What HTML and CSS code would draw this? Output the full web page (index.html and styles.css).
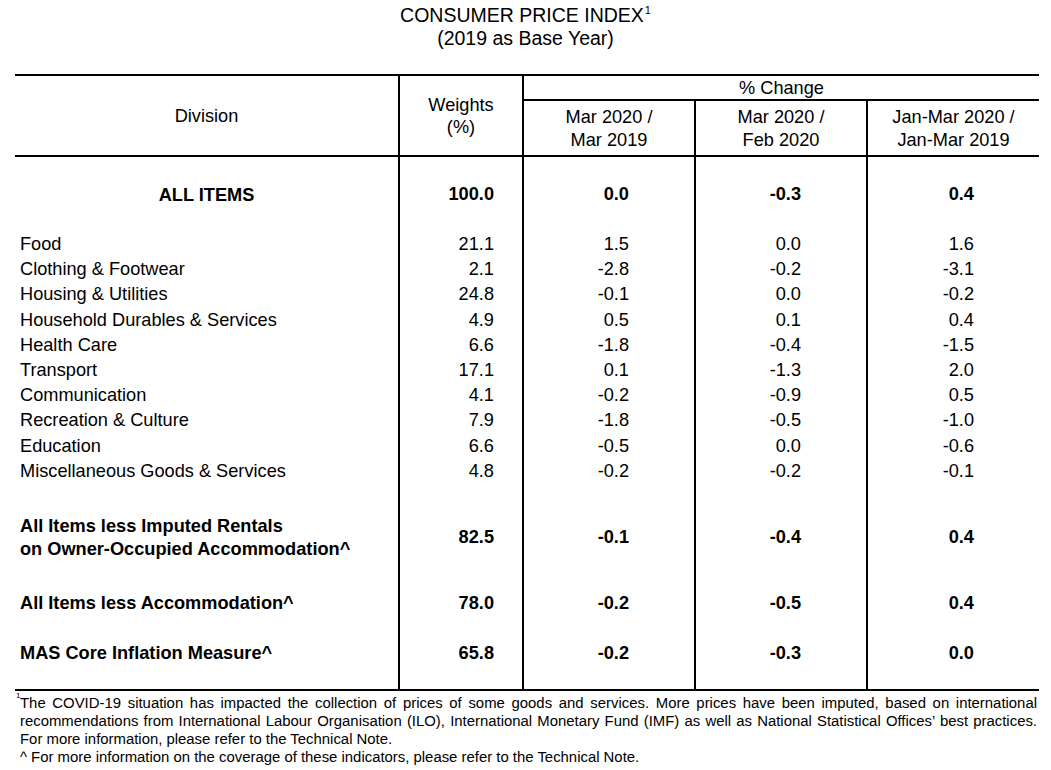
FILE: index.html
```html
<!DOCTYPE html>
<html lang="en">
<head>
<meta charset="utf-8">
<title>Consumer Price Index</title>
<link rel="stylesheet" href="styles.css">
</head>
<body>
<div class="page">
  <header class="title">
    <div>CONSUMER PRICE INDEX<sup class="t-sup">1</sup></div>
    <div>(2019 as Base Year)</div>
  </header>

  <div class="cpi">
    <div class="head">
      <div class="h h-div">Division</div>
      <div class="h h-wt">Weights<br>(%)</div>
      <div class="h h-chg">% Change</div>
      <div class="h h-sub">Mar 2020 /<br>Mar 2019</div>
      <div class="h h-sub">Mar 2020 /<br>Feb 2020</div>
      <div class="h h-sub">Jan-Mar 2020 /<br>Jan-Mar 2019</div>
    </div>

    <div class="body">
      <div class="row r-all bold">
        <div class="c c-name center">ALL ITEMS</div>
        <div class="c c-wt">100.0</div>
        <div class="c c-v">0.0</div>
        <div class="c c-v">-0.3</div>
        <div class="c c-v">0.4</div>
      </div>
      <div class="row r-item">
        <div class="c c-name">Food</div>
        <div class="c c-wt">21.1</div>
        <div class="c c-v">1.5</div>
        <div class="c c-v">0.0</div>
        <div class="c c-v">1.6</div>
      </div>
      <div class="row r-item">
        <div class="c c-name">Clothing &amp; Footwear</div>
        <div class="c c-wt">2.1</div>
        <div class="c c-v">-2.8</div>
        <div class="c c-v">-0.2</div>
        <div class="c c-v">-3.1</div>
      </div>
      <div class="row r-item">
        <div class="c c-name">Housing &amp; Utilities</div>
        <div class="c c-wt">24.8</div>
        <div class="c c-v">-0.1</div>
        <div class="c c-v">0.0</div>
        <div class="c c-v">-0.2</div>
      </div>
      <div class="row r-item">
        <div class="c c-name">Household Durables &amp; Services</div>
        <div class="c c-wt">4.9</div>
        <div class="c c-v">0.5</div>
        <div class="c c-v">0.1</div>
        <div class="c c-v">0.4</div>
      </div>
      <div class="row r-item">
        <div class="c c-name">Health Care</div>
        <div class="c c-wt">6.6</div>
        <div class="c c-v">-1.8</div>
        <div class="c c-v">-0.4</div>
        <div class="c c-v">-1.5</div>
      </div>
      <div class="row r-item">
        <div class="c c-name">Transport</div>
        <div class="c c-wt">17.1</div>
        <div class="c c-v">0.1</div>
        <div class="c c-v">-1.3</div>
        <div class="c c-v">2.0</div>
      </div>
      <div class="row r-item">
        <div class="c c-name">Communication</div>
        <div class="c c-wt">4.1</div>
        <div class="c c-v">-0.2</div>
        <div class="c c-v">-0.9</div>
        <div class="c c-v">0.5</div>
      </div>
      <div class="row r-item">
        <div class="c c-name">Recreation &amp; Culture</div>
        <div class="c c-wt">7.9</div>
        <div class="c c-v">-1.8</div>
        <div class="c c-v">-0.5</div>
        <div class="c c-v">-1.0</div>
      </div>
      <div class="row r-item">
        <div class="c c-name">Education</div>
        <div class="c c-wt">6.6</div>
        <div class="c c-v">-0.5</div>
        <div class="c c-v">0.0</div>
        <div class="c c-v">-0.6</div>
      </div>
      <div class="row r-item">
        <div class="c c-name">Miscellaneous Goods &amp; Services</div>
        <div class="c c-wt">4.8</div>
        <div class="c c-v">-0.2</div>
        <div class="c c-v">-0.2</div>
        <div class="c c-v">-0.1</div>
      </div>
      <div class="row r-ir bold">
        <div class="c c-name">All Items less Imputed Rentals<br>on Owner-Occupied Accommodation^</div>
        <div class="c c-wt">82.5</div>
        <div class="c c-v">-0.1</div>
        <div class="c c-v">-0.4</div>
        <div class="c c-v">0.4</div>
      </div>
      <div class="row r-acc bold">
        <div class="c c-name">All Items less Accommodation^</div>
        <div class="c c-wt">78.0</div>
        <div class="c c-v">-0.2</div>
        <div class="c c-v">-0.5</div>
        <div class="c c-v">0.4</div>
      </div>
      <div class="row r-mas bold">
        <div class="c c-name">MAS Core Inflation Measure^</div>
        <div class="c c-wt">65.8</div>
        <div class="c c-v">-0.2</div>
        <div class="c c-v">-0.3</div>
        <div class="c c-v">0.0</div>
      </div>
    </div>
  </div>

  <div class="notes">
    <p class="note-just"><sup class="n-sup">1</sup>The COVID-19 situation has impacted the collection of prices of some goods and services. More prices have been imputed, based on international recommendations from International Labour Organisation (ILO), International Monetary Fund (IMF) as well as National Statistical Offices’ best practices.</p>
    <p class="note">For more information, please refer to the Technical Note.</p>
    <p class="note note-last">^ For more information on the coverage of these indicators, please refer to the Technical Note.</p>
  </div>
</div>
</body>
</html>
```

FILE: styles.css
```css
html, body {
  margin: 0;
  padding: 0;
  background: #ffffff;
}

body {
  font-family: "Liberation Sans", Arial, sans-serif;
  color: #000000;
}

.page {
  width: 1051px;
}

.title {
  padding-top: 4px;
  text-align: center;
  font-size: 19.5px;
  line-height: 23px;
}

.t-sup {
  font-size: 11px;
  line-height: 0;
  vertical-align: 8px;
  margin-left: 1px;
}

.cpi {
  width: 1024px;
  margin: 24px 0 0 15px;
}

.head {
  display: grid;
  grid-template-columns: 383px 124px 172px 172px 173px;
  grid-template-rows: 25px 54px;
  border-top: 2px solid #000;
  border-bottom: 2px solid #000;
  font-size: 18.2px;
  line-height: 22.5px;
}

.h {
  display: flex;
  align-items: center;
  justify-content: center;
  text-align: center;
  box-sizing: border-box;
}

.h-div {
  grid-row: 1 / 3;
  grid-column: 1;
  padding-top: 2px;
}

.h-wt {
  grid-row: 1 / 3;
  grid-column: 2;
  border-left: 2px solid #000;
  padding-top: 1px;
}

.h-chg {
  grid-row: 1;
  grid-column: 3 / 6;
  border-left: 2px solid #000;
  border-bottom: 2px solid #000;
  padding-top: 1px;
}

.h-sub {
  grid-row: 2;
  border-left: 2px solid #000;
  padding-top: 1px;
}

.body {
  border-bottom: 2px solid #000;
  font-size: 18.2px;
  line-height: 23px;
}

.row {
  display: grid;
  grid-template-columns: 383px 124px 172px 172px 173px;
}

.bold {
  font-weight: bold;
}

.c {
  display: flex;
  align-items: center;
  box-sizing: border-box;
  height: 100%;
}

.c-name {
  padding-left: 5px;
}

.c-name.center {
  justify-content: center;
  padding-left: 0;
  padding-top: 2px;
}

.c-wt {
  justify-content: flex-end;
  border-left: 2px solid #000;
  padding-right: 28px;
}

.c-v {
  justify-content: flex-end;
  border-left: 2px solid #000;
  padding-right: 65px;
}

.r-all {
  height: 75px;
}

.r-all .c {
  padding-bottom: 1px;
}

.r-item {
  height: 25.2px;
}

.r-ir {
  height: 77px;
}

.r-ir .c {
  padding-top: 31px;
}

.r-acc {
  height: 55.5px;
}

.r-acc .c {
  padding-top: 30.5px;
}

.r-mas {
  height: 72.5px;
}

.r-mas .c {
  padding-top: 25px;
  padding-bottom: 22.5px;
}

.notes {
  width: 1017px;
  margin: 3px 0 0 20px;
  font-size: 14.9px;
  line-height: 18px;
}

.notes p {
  margin: 0;
}

.note-just {
  position: relative;
  text-align: justify;
  text-align-last: justify;
}

.note-last {
  margin-top: 1px;
}

.n-sup {
  position: absolute;
  left: -4px;
  top: -2px;
  font-size: 8px;
  line-height: 8px;
}
```
